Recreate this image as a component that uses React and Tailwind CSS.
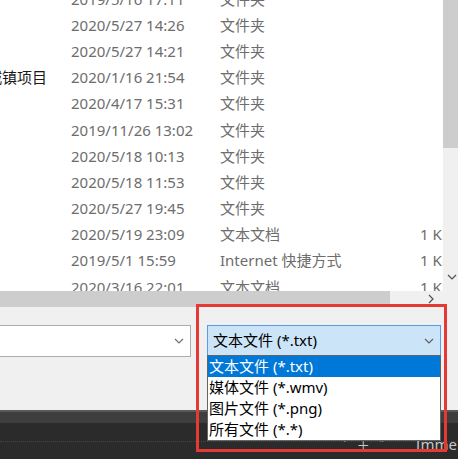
import React from "react";

const rows = [
  ["", "2019/5/16 17:11", "文件夹", ""],
  ["", "2020/5/27 14:26", "文件夹", ""],
  ["", "2020/5/27 14:21", "文件夹", ""],
  ["城镇项目", "2020/1/16 21:54", "文件夹", ""],
  ["", "2020/4/17 15:31", "文件夹", ""],
  ["", "2019/11/26 13:02", "文件夹", ""],
  ["", "2020/5/18 10:13", "文件夹", ""],
  ["", "2020/5/18 11:53", "文件夹", ""],
  ["", "2020/5/27 19:45", "文件夹", ""],
  ["", "2020/5/19 23:09", "文本文档", "1 KB"],
  ["", "2019/5/1 15:59", "Internet 快捷方式", "1 KB"],
  ["", "2020/3/16 22:01", "文本文档", "1 KB"],
];

const Chevron = ({ className = "", color = "#606060" }) => (
  <svg width="10" height="6" viewBox="0 0 10 6" className={className}>
    <polyline points="1,1 5,5 9,1" fill="none" stroke={color} strokeWidth="1.2" />
  </svg>
);

export default function App() {
  return (
    <div
      className="relative w-[458px] h-[459px] overflow-hidden bg-[#f0f0f0]"
      style={{ fontFamily: '"Noto Sans", "Noto Sans CJK SC", sans-serif' }}
    >
      {/* file list area */}
      <div className="flex h-[291px]">
        <div className="flex-1 bg-white overflow-hidden">
          <div className="mt-[-14px] flex flex-col">
            {rows.map((r, i) => (
              <div key={i} className="flex h-[26.2px] items-center text-[15px] leading-none shrink-0">
                <div className="w-[47px] flex justify-end overflow-hidden whitespace-nowrap text-[#1a1a1a]">
                  <span className="shrink-0">{r[0]}</span>
                </div>
                <div className="w-[24px]" />
                <div className="w-[149px] text-[#6d6d6d] whitespace-nowrap">{r[1]}</div>
                <div className="w-[200px] text-[#6d6d6d] whitespace-nowrap">{r[2]}</div>
                <div className="flex-1 text-[#6d6d6d] whitespace-nowrap overflow-hidden">{r[3]}</div>
              </div>
            ))}
          </div>
        </div>
        {/* vertical scrollbar */}
        <div className="w-[15px] flex flex-col bg-[#f0f0f0]">
          <div className="h-[148px] bg-[#cdcdcd]" />
          <div className="flex-1" />
          <div className="h-[16px] flex items-center justify-center mb-[6px] pl-[3px]">
            <Chevron color="#505050" />
          </div>
        </div>
      </div>

      {/* horizontal scrollbar */}
      <div className="flex h-[16px] bg-[#f0f0f0]">
        <div className="w-[390px] bg-[#cdcdcd]" />
        <div className="flex-1 flex items-center">
          <svg width="6" height="10" viewBox="0 0 6 10" className="ml-[38px]">
            <polyline points="1,1 5,5 1,9" fill="none" stroke="#505050" strokeWidth="1.2" />
          </svg>
        </div>
      </div>

      {/* dialog bottom */}
      <div className="h-[103px] bg-[#f0f0f0] pt-[18px] flex items-start">
        <div className="w-[191px] h-[32px] bg-white border border-[#adadad] border-l-0 flex items-center justify-end pr-[6px]">
          <Chevron color="#707070" />
        </div>
        <div className="w-[16px]" />
        <div className="w-[234px] h-[31px] bg-[#cce4f7] border border-[#569de5] flex items-center justify-between pl-[5px] pr-[6px] text-[15px] text-black whitespace-nowrap">
          <span>文本文件 (*.txt)</span>
          <Chevron color="#606060" />
        </div>
      </div>

      {/* dark taskbar area */}
      <div className="h-[49px] flex flex-col">
        <div className="h-[2px] bg-[#5a5a5a]" />
        <div className="h-[11px] bg-[#3e3e3e]" />
        <div className="flex-1 bg-[#2b2b2b] relative">
          <div className="mt-[18px] h-[1px] border-t border-dotted border-[#444]" />
          <div className="absolute left-[343px] top-[14px] flex items-center gap-[10px] text-[13px] leading-none text-[#c8c8c8]">
            <span>˅</span>
            <span>∓</span>
            <span>˄</span>
            <span className="ml-[22px] text-[15px]">Imme</span>
          </div>
        </div>
      </div>

      {/* dropdown list popup */}
      <div className="absolute left-[207px] top-[355px] w-[234px] bg-white border border-[#646464] flex flex-col text-[15px] leading-[21px] text-black whitespace-nowrap">
        <div className="h-[21px] bg-[#0078d7] text-white pl-[1px]">文本文件 (*.txt)</div>
        <div className="h-[21px] pl-[1px]">媒体文件 (*.wmv)</div>
        <div className="h-[21px] pl-[1px]">图片文件 (*.png)</div>
        <div className="h-[21px] pl-[1px]">所有文件 (*.*)</div>
      </div>

      {/* red annotation rectangle */}
      <div className="absolute left-[196px] top-[304px] w-[251px] h-[148px] border-[3px] border-[#e53935] pointer-events-none" />
    </div>
  );
}
